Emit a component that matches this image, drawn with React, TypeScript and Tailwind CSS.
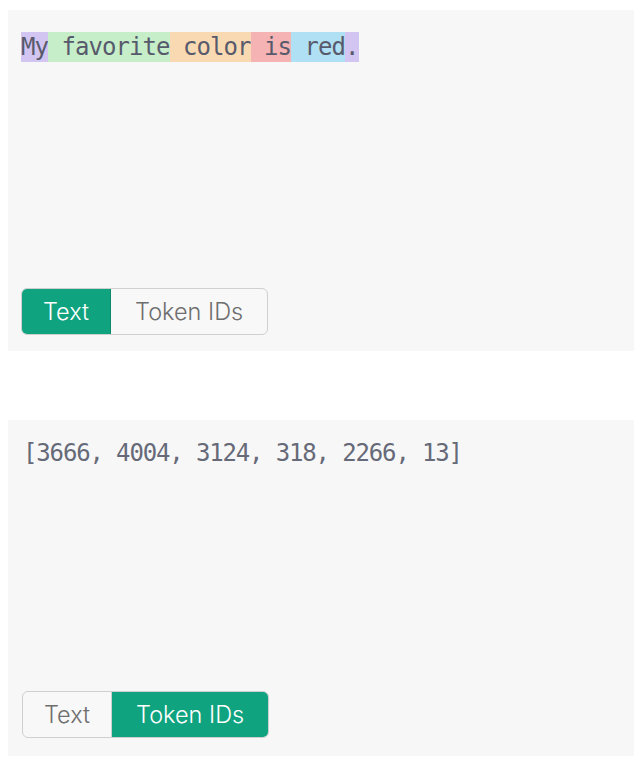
import { useState } from 'react';

const tokens = [
  { text: 'My', bg: 'bg-[#d2c5f2]' },
  { text: ' favorite', bg: 'bg-[#c5eec9]' },
  { text: ' color', bg: 'bg-[#f8d9b2]' },
  { text: ' is', bg: 'bg-[#f6b3b3]' },
  { text: ' red', bg: 'bg-[#b0e0f3]' },
  { text: '.', bg: 'bg-[#d2c5f2]' },
];

const ids = [3666, 4004, 3124, 318, 2266, 13];

function Toggle({ mode }: { mode: 'text' | 'ids' }) {
  const base = 'h-full text-[23.5px] leading-none font-light';
  return (
    <div className="flex h-[47px] w-fit rounded-md border border-[#cfcfcf] bg-[#f8f8f8] overflow-hidden font-['Inter',sans-serif]">
      <button
        className={
          mode === 'text'
            ? `${base} px-[21px] bg-[#10a37f] text-white border-r border-[#0d8a6b]`
            : `${base} px-[21px] text-[#6e6e6e] border-r border-[#cfcfcf]`
        }
      >
        Text
      </button>
      <button
        className={
          mode === 'ids'
            ? `${base} px-[24px] bg-[#10a37f] text-white`
            : `${base} px-[24px] text-[#6e6e6e]`
        }
      >
        Token IDs
      </button>
    </div>
  );
}

export default function App() {
  const [first] = useState<'text' | 'ids'>('text');

  return (
    <div className="min-h-screen bg-white pt-[10px] pl-[8px]">
      {/* Tokenized text panel */}
      <div className="h-[341px] bg-[#f7f7f7] pl-[13px] pt-[22px] pb-[16px] flex flex-col justify-between">
        <div className="flex font-['DejaVu_Sans_Mono',monospace] text-[24px] tracking-[-0.95px] leading-[30px] text-[#585a6c] whitespace-pre">
          {tokens.map((t, i) => (
            <span key={i} className={t.bg}>
              {t.text}
            </span>
          ))}
        </div>
        <Toggle mode={first} />
      </div>

      {/* Token IDs panel */}
      <div className="mt-[69px] h-[336px] bg-[#f7f7f7] pl-[14px] pt-[19px] pb-[18px] flex flex-col justify-between">
        <div className="pl-px font-['DejaVu_Sans_Mono',monospace] text-[24px] tracking-[-1.15px] leading-[28px] text-[#666a78] whitespace-pre">
          [{ids.join(', ')}]
        </div>
        <Toggle mode="ids" />
      </div>
    </div>
  );
}
